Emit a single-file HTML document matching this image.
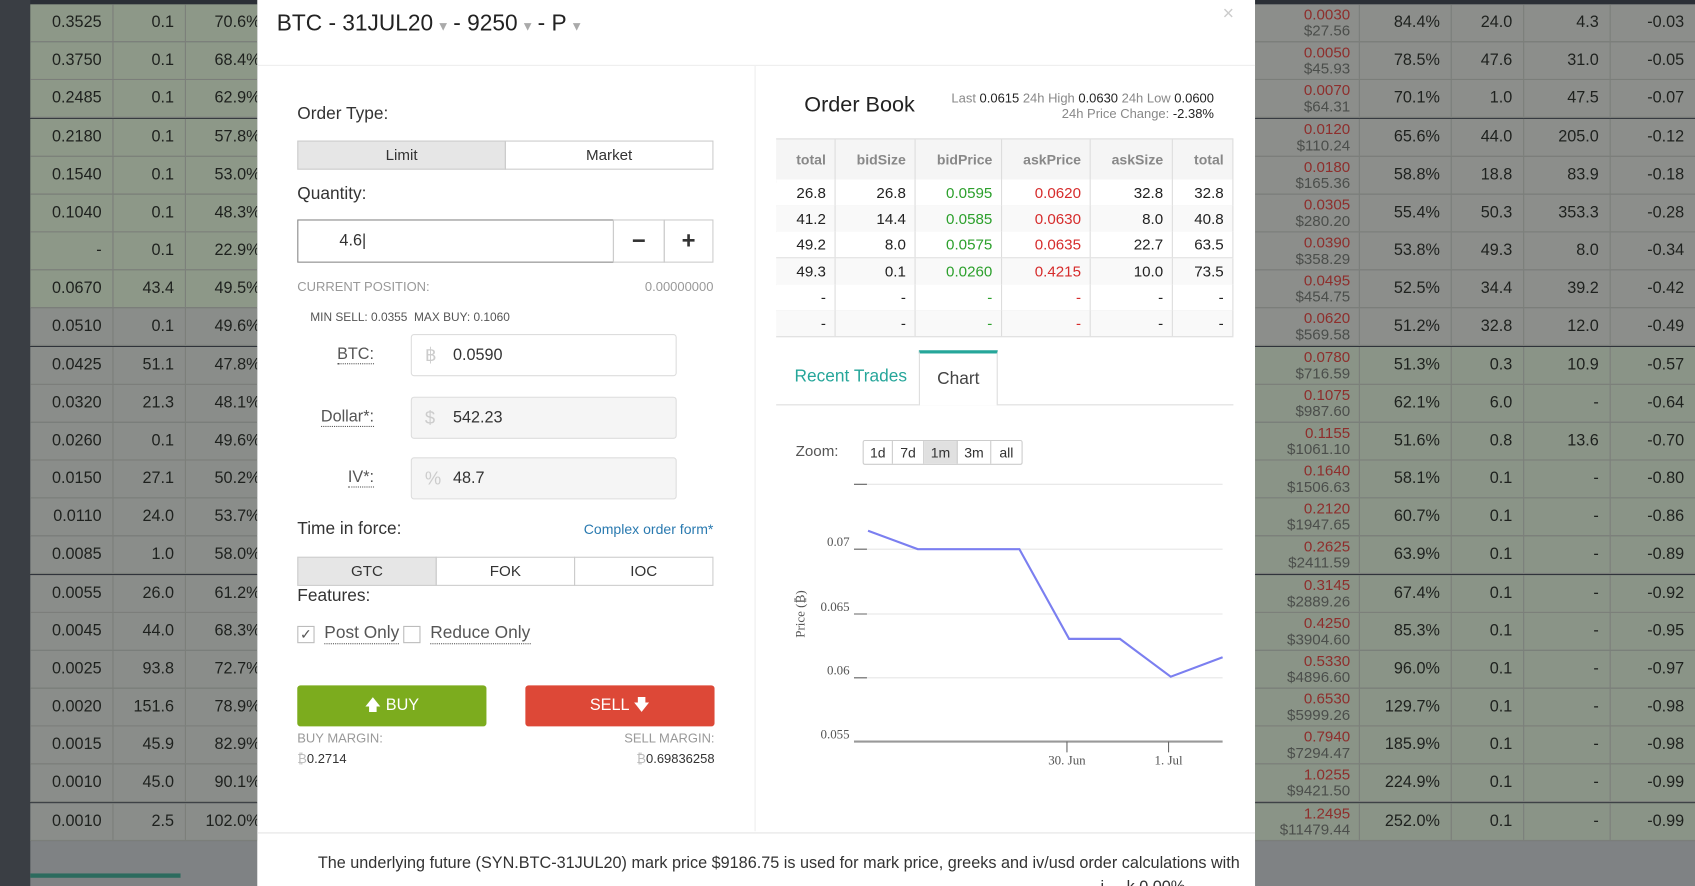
<!DOCTYPE html>
<html><head><meta charset="utf-8">
<style>
html,body{margin:0;padding:0;width:1695px;height:886px;overflow:hidden;background:#2b2f36;}
#w{position:absolute;left:0;top:0;width:1568px;height:820px;transform:scale(1.0810);transform-origin:0 0;font-family:"Liberation Sans",sans-serif;color:#333;overflow:hidden;background:#2f333a;}
.a{position:absolute;}
.row{position:absolute;height:34px;border-bottom:1px solid #7b7e7a;}
.c{position:absolute;top:0;height:34px;line-height:34px;text-align:right;font-size:15px;color:#1e211e;border-right:1px solid #7b7e7a;box-sizing:border-box;padding-right:10px;}
.pr{line-height:15px;padding-top:2px;font-size:14px}
.pr b{display:block;font-weight:normal;color:#8e2e2c}
.pr i{display:block;font-style:normal;color:#4b4e4b}
.btn{position:absolute;border:1px solid #ccc;box-sizing:border-box;text-align:center;font-size:14px;color:#333;}
.ob{position:absolute;left:718px;width:423px;height:26px;border-bottom:1px solid #ddd;}
.ob span{position:absolute;top:0;line-height:25px;text-align:right;font-size:14px;border-right:1px solid #ddd;box-sizing:border-box;padding-right:8px;height:25px}
.g{color:#2ca02c}.r{color:#d62c2c}
.lbl{position:absolute;font-size:12px;color:#999}
.inp{position:absolute;left:380px;width:246px;height:39px;border:1px solid #ddd;border-radius:3px;box-sizing:border-box;font-size:15px;line-height:37px;padding-left:38px;}
.inp em{position:absolute;left:12px;color:#ccc;font-style:normal;font-size:17px}
.fl{position:absolute;font-size:15px;color:#555;text-align:right;width:70px;left:276px;}
.fl u{text-decoration:none;border-bottom:1px dotted #555}
</style></head><body><div id="w">
<div class="a" style="left:0;top:0;width:1568px;height:4px;background:#2b2f36"></div>
<div class="a" style="left:0;top:0;width:28px;height:820px;background:#3a3e44"></div>
<div class="a" style="left:28px;top:778px;width:1540px;height:42px;background:#7f8284"></div>
<div class="a" style="left:28px;top:808px;width:139px;height:4px;background:#2c6b5e"></div>
<div id="L"></div><div id="R"></div>

<div class="a" style="left:238px;top:0;width:923px;height:820px;background:#fff;">
<div class="a" style="left:18px;top:10px;font-size:21px;color:#222;">BTC - 31JUL20<span style="color:#aaa;font-size:12px"> ▼ </span>- 9250<span style="color:#aaa;font-size:12px"> ▼ </span>- P<span style="color:#aaa;font-size:12px"> ▼</span></div>
<div class="a" style="left:893px;top:2px;font-size:18px;color:#ccc">×</div>
<div class="a" style="left:0;top:60px;width:923px;height:1px;background:#eee"></div>
<div class="a" style="left:460px;top:61px;width:1px;height:708px;background:#eee"></div>
<div class="a" style="left:0;top:770px;width:923px;height:1px;background:#e4e4e4"></div>
<div class="a" style="left:56px;top:790px;font-size:15px;color:#333;white-space:nowrap">The underlying future (SYN.BTC-31JUL20) mark price $9186.75 is used for mark price, greeks and iv/usd order calculations with</div>
<div class="a" style="left:780px;top:812px;font-size:15px;color:#333">i ... k 0.00%</div>
</div>

<div class="a" style="left:275px;top:97px;font-size:16px">Order Type:</div>
<div class="btn" style="left:275px;top:130px;width:193px;height:27px;line-height:25px;background:#e6e6e6">Limit</div>
<div class="btn" style="left:467px;top:130px;width:193px;height:27px;line-height:25px">Market</div>
<div class="a" style="left:275px;top:171px;font-size:16px">Quantity:</div>
<div class="a" style="left:275px;top:203px;width:293px;height:40px;border:1px solid #888;box-sizing:border-box;font-size:15px;line-height:38px;padding-left:38px">4.6|</div>
<div class="btn" style="left:567px;top:203px;width:48px;height:40px;line-height:38px;font-size:22px;font-weight:bold">−</div>
<div class="btn" style="left:614px;top:203px;width:46px;height:40px;line-height:38px;font-size:22px;font-weight:bold">+</div>
<div class="lbl" style="left:275px;top:258px">CURRENT POSITION:</div>
<div class="lbl" style="left:560px;top:258px;width:100px;text-align:right">0.00000000</div>
<div class="a" style="left:287px;top:288px;font-size:11px;color:#555">MIN SELL: 0.0355 &nbsp;MAX BUY: 0.1060</div>
<div class="fl" style="top:319px"><u>BTC:</u></div>
<div class="inp" style="top:309px"><em>฿</em>0.0590</div>
<div class="fl" style="top:377px"><u>Dollar*:</u></div>
<div class="inp" style="top:367px;background:#f5f5f5"><em>$</em>542.23</div>
<div class="fl" style="top:433px"><u>IV*:</u></div>
<div class="inp" style="top:423px;background:#f5f5f5"><em>%</em>48.7</div>
<div class="a" style="left:275px;top:481px;font-size:16px">Time in force:</div>
<div class="a" style="left:540px;top:482px;font-size:13px;color:#2a7ab0">Complex order form*</div>
<div class="btn" style="left:275px;top:515px;width:129px;height:27px;line-height:25px;background:#e6e6e6">GTC</div>
<div class="btn" style="left:403px;top:515px;width:129px;height:27px;line-height:25px">FOK</div>
<div class="btn" style="left:531px;top:515px;width:129px;height:27px;line-height:25px">IOC</div>
<div class="a" style="left:275px;top:543px;font-size:16px">Features:</div>
<div class="a" style="left:275px;top:579px;width:16px;height:16px;border:1px solid #bbb;box-sizing:border-box;font-size:13px;line-height:14px;text-align:center;color:#555">✓</div>
<div class="a" style="left:300px;top:577px;font-size:16px;color:#555;border-bottom:1px dotted #555">Post Only</div>
<div class="a" style="left:373px;top:579px;width:16px;height:16px;border:1px solid #bbb;box-sizing:border-box"></div>
<div class="a" style="left:398px;top:577px;font-size:16px;color:#555;border-bottom:1px dotted #555">Reduce Only</div>
<div class="a" style="left:275px;top:634px;width:175px;height:38px;background:#7cac1e;border-radius:3px;color:#fff;text-align:center;line-height:38px;font-size:15px">🡅 BUY</div>
<div class="a" style="left:486px;top:634px;width:175px;height:38px;background:#dd4837;border-radius:3px;color:#fff;text-align:center;line-height:38px;font-size:15px">SELL 🡇</div>
<div class="lbl" style="left:275px;top:676px">BUY MARGIN:</div>
<div class="lbl" style="left:560px;top:676px;width:101px;text-align:right">SELL MARGIN:</div>
<div class="a" style="left:275px;top:695px;font-size:12px;color:#333"><span style="color:#bbb">₿</span>0.2714</div>
<div class="a" style="left:561px;top:695px;width:100px;text-align:right;font-size:12px;color:#333"><span style="color:#bbb">₿</span>0.69836258</div>

<div class="a" style="left:744px;top:86px;font-size:20px;color:#222">Order Book</div>
<div class="a" style="left:860px;top:84px;width:263px;text-align:right;font-size:12px;color:#888;line-height:14px">Last <span style="color:#222">0.0615</span> 24h High <span style="color:#222">0.0630</span> 24h Low <span style="color:#222">0.0600</span><br>24h Price Change: <span style="color:#222">-2.38%</span></div>
<div id="OB"></div>
<div class="a" style="left:718px;top:374px;width:423px;height:1px;background:#ddd"></div>
<div class="a" style="left:735px;top:340px;font-size:16px;color:#26a69a">Recent Trades</div>
<div class="a" style="left:850px;top:324px;width:73px;height:51px;background:#fff;border-left:1px solid #ddd;border-right:1px solid #ddd;border-top:3px solid #26a69a;box-sizing:border-box;text-align:center;line-height:48px;font-size:16px;color:#444">Chart</div>
<div class="a" style="left:736px;top:409px;font-size:14px;color:#555">Zoom:</div>
<div class="a" style="left:798px;top:407px;height:23px;border:1px solid #ccc;border-radius:2px;font-size:13px;display:flex;box-sizing:border-box;line-height:21px">
<span style="width:26px;text-align:center;border-right:1px solid #ccc">1d</span><span style="width:28px;text-align:center;border-right:1px solid #ccc">7d</span><span style="width:30px;text-align:center;border-right:1px solid #ccc;background:#e0e0e0">1m</span><span style="width:30px;text-align:center;border-right:1px solid #ccc">3m</span><span style="width:28px;text-align:center">all</span></div>
<svg class="a" style="left:718px;top:430px" width="430" height="300">
<g stroke="#e6e6e6" stroke-width="1"><line x1="72" y1="18" x2="413" y2="18"/><line x1="72" y1="78" x2="413" y2="78"/><line x1="72" y1="138" x2="413" y2="138"/><line x1="72" y1="197" x2="413" y2="197"/></g>
<g stroke="#666"><line x1="72" y1="18" x2="84" y2="18"/><line x1="72" y1="78" x2="84" y2="78"/><line x1="72" y1="138" x2="84" y2="138"/><line x1="72" y1="197" x2="84" y2="197"/><line x1="72" y1="256" x2="413" y2="256" stroke="#999" stroke-width="2"/><line x1="269" y1="256" x2="269" y2="266"/><line x1="363" y1="256" x2="363" y2="266"/></g>
<polyline fill="none" stroke="#7b7ff0" stroke-width="2" points="85,61 131,78 225,78 271,161 318,161 365,196 413,178"/>
<g font-family="Liberation Serif,serif" font-size="12" fill="#555"><text x="68" y="75" text-anchor="end">0.07</text><text x="68" y="135" text-anchor="end">0.065</text><text x="68" y="194" text-anchor="end">0.06</text><text x="68" y="253" text-anchor="end">0.055</text><text x="269" y="277" text-anchor="middle">30. Jun</text><text x="363" y="277" text-anchor="middle">1. Jul</text><text transform="translate(26,138) rotate(-90)" text-anchor="middle">Price (₿)</text></g>
</svg>
</div>
<script>
var L=[["0.3525","0.1","70.6%"],["0.3750","0.1","68.4%"],["0.2485","0.1","62.9%"],["0.2180","0.1","57.8%"],["0.1540","0.1","53.0%"],["0.1040","0.1","48.3%"],["-","0.1","22.9%"],["0.0670","43.4","49.5%"],["0.0510","0.1","49.6%"],["0.0425","51.1","47.8%"],["0.0320","21.3","48.1%"],["0.0260","0.1","49.6%"],["0.0150","27.1","50.2%"],["0.0110","24.0","53.7%"],["0.0085","1.0","58.0%"],["0.0055","26.0","61.2%"],["0.0045","44.0","68.3%"],["0.0025","93.8","72.7%"],["0.0020","151.6","78.9%"],["0.0015","45.9","82.9%"],["0.0010","45.0","90.1%"],["0.0010","2.5","102.0%"]];
var R=[["0.0030","$27.56","84.4%","24.0","4.3","-0.03"],["0.0050","$45.93","78.5%","47.6","31.0","-0.05"],["0.0070","$64.31","70.1%","1.0","47.5","-0.07"],["0.0120","$110.24","65.6%","44.0","205.0","-0.12"],["0.0180","$165.36","58.8%","18.8","83.9","-0.18"],["0.0305","$280.20","55.4%","50.3","353.3","-0.28"],["0.0390","$358.29","53.8%","49.3","8.0","-0.34"],["0.0495","$454.75","52.5%","34.4","39.2","-0.42"],["0.0620","$569.58","51.2%","32.8","12.0","-0.49"],["0.0780","$716.59","51.3%","0.3","10.9","-0.57"],["0.1075","$987.60","62.1%","6.0","-","-0.64"],["0.1155","$1061.10","51.6%","0.8","13.6","-0.70"],["0.1640","$1506.63","58.1%","0.1","-","-0.80"],["0.2120","$1947.65","60.7%","0.1","-","-0.86"],["0.2625","$2411.59","63.9%","0.1","-","-0.89"],["0.3145","$2889.26","67.4%","0.1","-","-0.92"],["0.4250","$3904.60","85.3%","0.1","-","-0.95"],["0.5330","$4896.60","96.0%","0.1","-","-0.97"],["0.6530","$5999.26","129.7%","0.1","-","-0.98"],["0.7940","$7294.47","185.9%","0.1","-","-0.98"],["1.0255","$9421.50","224.9%","0.1","-","-0.99"],["1.2495","$11479.44","252.0%","0.1","-","-0.99"]];
var h="";
L.forEach(function(r,i){var t=Math.round(4+i*35.17);var bg=i<8?"#8d9888":"#8a8d8a";
h+='<div class="row" style="left:28px;top:'+t+'px;width:210px;background:'+bg+'"><div class="c" style="left:0;width:77px">'+r[0]+'</div><div class="c" style="left:77px;width:67px">'+r[1]+'</div><div class="c" style="left:144px;width:80px">'+r[2]+'</div></div>';});
document.getElementById("L").innerHTML=h;h="";
R.forEach(function(r,i){var t=Math.round(4+i*35.17);var bg=i<9?"#8c8e8b":"#8a9487";
h+='<div class="row" style="left:1161px;top:'+t+'px;width:407px;background:'+bg+'">'+
'<div class="c pr" style="left:0;width:97px;padding-right:8px"><b>'+r[0]+'</b><i>'+r[1]+'</i></div>'+
'<div class="c" style="left:97px;width:85px">'+r[2]+'</div><div class="c" style="left:182px;width:67px">'+r[3]+'</div><div class="c" style="left:249px;width:80px">'+r[4]+'</div><div class="c" style="left:329px;width:78px;border-right:0">'+r[5]+'</div></div>';});
document.getElementById("R").innerHTML=h;h="";
var w=[55,74,80,82,76,56];
var ob=[["total","bidSize","bidPrice","askPrice","askSize","total"],["26.8","26.8","0.0595","0.0620","32.8","32.8"],["41.2","14.4","0.0585","0.0630","8.0","40.8"],["49.2","8.0","0.0575","0.0635","22.7","63.5"],["49.3","0.1","0.0260","0.4215","10.0","73.5"],["-","-","-","-","-","-"],["-","-","-","-","-","-"]];
ob.forEach(function(r,i){var t,ht;if(i==0){t=128;ht=38}else{t=Math.round(166+(i-1)*24.2);ht=24}
var bg=i==0?"#f5f5f5":(i%2==0?"#f9f9f9":"#fff");var s='<div class="ob" style="top:'+t+'px;height:'+ht+'px;background:'+bg+(i==0?';border-top:1px solid #ddd;border-bottom:2px solid #ddd':'')+'">';var x=0;
r.forEach(function(v,j){var cl=i>0&&j==2?"g":(i>0&&j==3?"r":"");s+='<span class="'+cl+'" style="left:'+x+'px;width:'+w[j]+'px;height:'+ht+'px;line-height:'+ht+'px;'+(i==0?'color:#888;font-weight:bold;font-size:13px':'color:'+(cl?'':'#222'))+'">'+v+'</span>';x+=w[j];});
h+=s+'</div>';});
document.getElementById("OB").innerHTML=h;
</script>
</body></html>
